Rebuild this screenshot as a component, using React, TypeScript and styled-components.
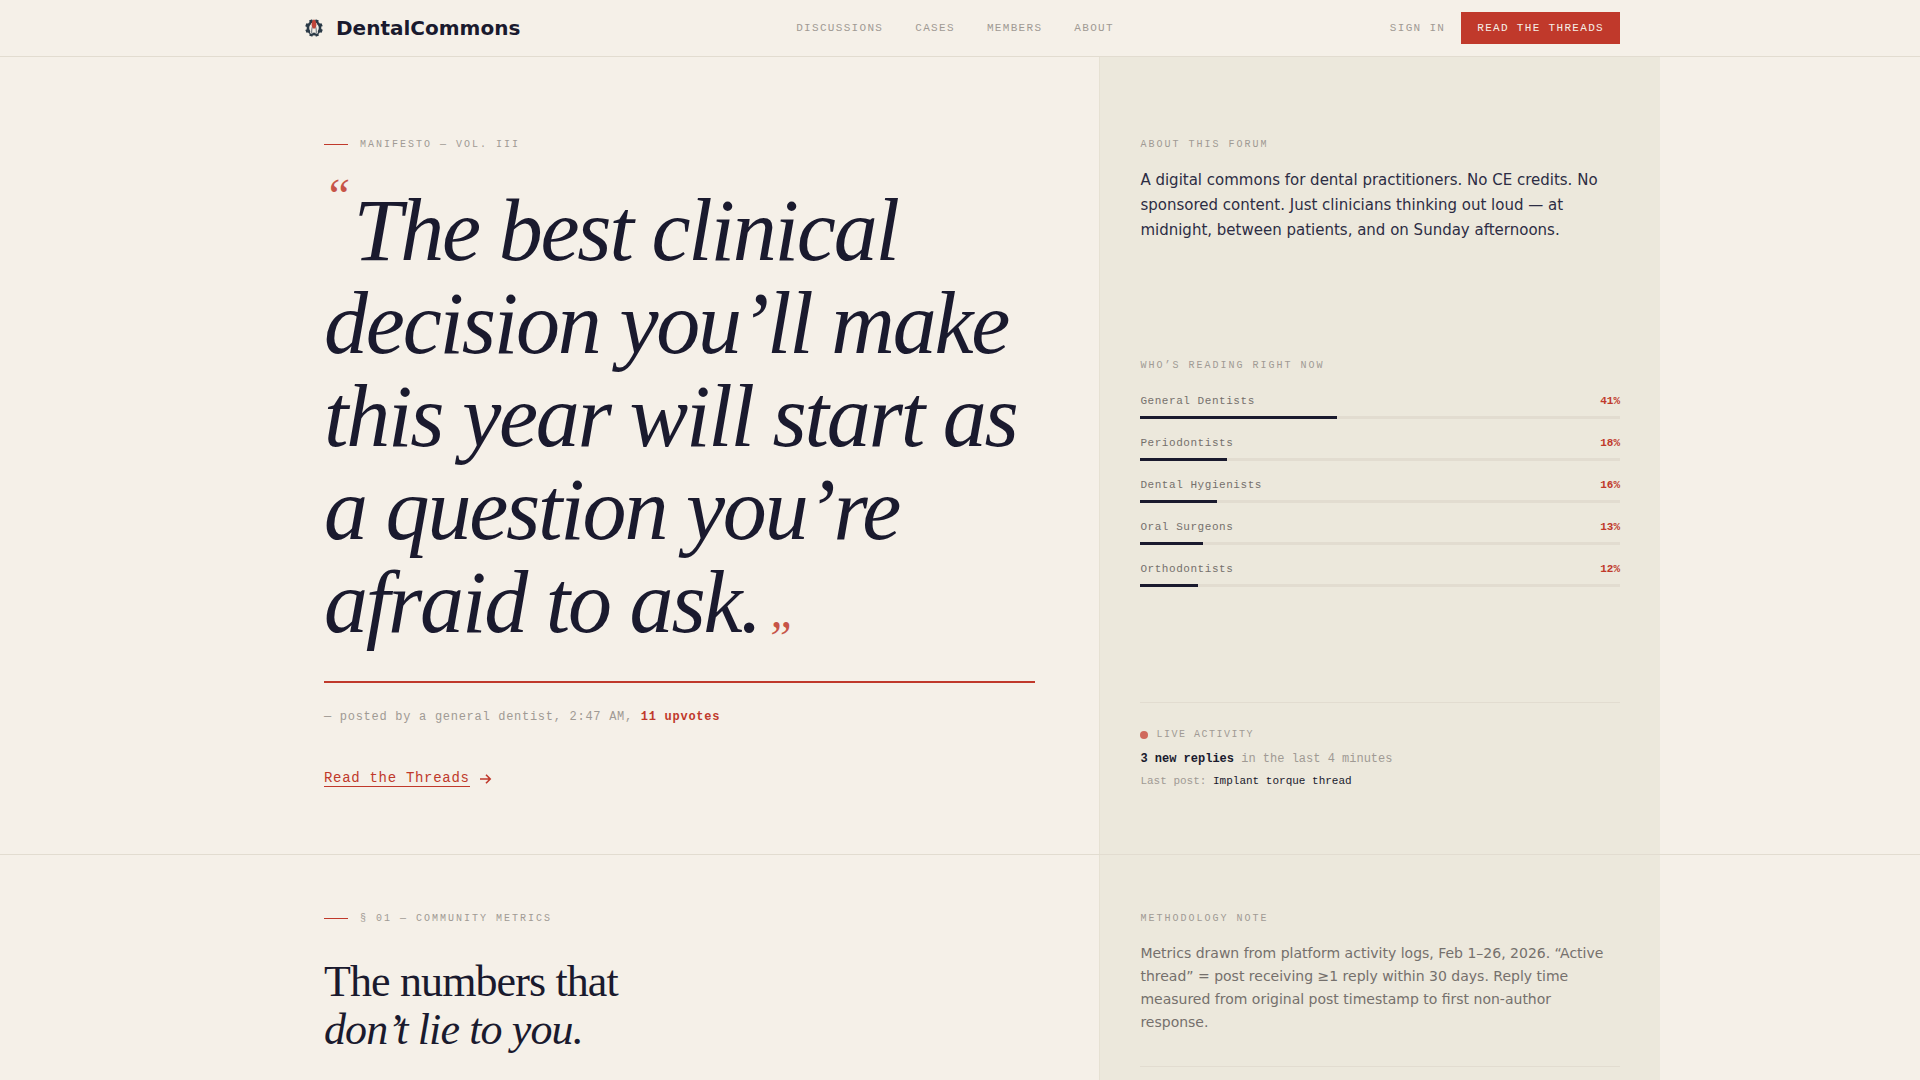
import React from "react";
import styled, { createGlobalStyle } from "styled-components";

const ink = "#1a1a2e";
const red = "#c0392b";
const mono = '"Liberation Mono", monospace';
const sans = '"DejaVu Sans", sans-serif';
const serif = '"Liberation Serif", serif';

const GlobalStyle = createGlobalStyle`
  *, *::before, *::after { box-sizing: border-box; }
  body { margin: 0; background: #f5f0e8; color: ${ink}; font-family: ${sans}; overflow-x: hidden; }
  h1, h2, h3, p, ul { margin: 0; padding: 0; }
  a { color: inherit; text-decoration: none; }
  ul { list-style: none; }
`;

const Header = styled.header`
  border-bottom: 1px solid #e2dcd0;
`;
const HeaderInner = styled.div`
  max-width: 1400px;
  height: 56px;
  margin: 0 auto;
  padding: 0 40px;
  display: flex;
  align-items: center;
  justify-content: space-between;
`;
const Brand = styled.a`
  display: flex;
  align-items: center;
  gap: 8px;
  font-size: 20px;
  font-weight: 700;
  line-height: 28px;
`;
const Nav = styled.nav`
  display: flex;
  gap: 32px;
`;
const NavLink = styled.a`
  font: 11px/16px ${mono};
  letter-spacing: 1.32px;
  text-transform: uppercase;
  color: #a09a94;
`;
const Actions = styled.div`
  display: flex;
  align-items: center;
  gap: 16px;
`;
const Cta = styled.button`
  border: 0;
  padding: 8px 16px;
  background: ${red};
  color: #f5f0e8;
  font: 11px/16px ${mono};
  letter-spacing: 1.32px;
  text-transform: uppercase;
  cursor: pointer;
`;

const Section = styled.section`
  border-bottom: 1px solid #e2dcd0;
`;
const Columns = styled.div`
  max-width: 1400px;
  margin: 0 auto;
  display: grid;
  grid-template-columns: 3fr 1px 2fr;
`;
const Divider = styled.div`
  background: #e6e1d3;
`;
const Main = styled.div<{ $top: number }>`
  padding: ${(p) => p.$top}px 64px 64px;
`;
const Aside = styled.aside<{ $top: number }>`
  display: flex;
  flex-direction: column;
  justify-content: space-between;
  padding: ${(p) => p.$top}px 40px 64px;
  background: #ece8dc;
`;
const Eyebrow = styled.div`
  display: flex;
  align-items: center;
  gap: 12px;
  font: 10px/15px ${mono};
  letter-spacing: 2px;
  text-transform: uppercase;
  color: #a09a94;
  &::before { content: ""; width: 24px; height: 1px; background: ${red}; }
`;
const Label = styled.h3`
  font: 10px/15px ${mono};
  letter-spacing: 2px;
  text-transform: uppercase;
  color: #a09a94;
`;

const Quote = styled.h1`
  margin-top: 32px;
  font: italic 400 88px/93px ${serif};
  letter-spacing: -2.2px;
`;
const Mark = styled.span`
  color: ${red};
  font-size: 48px;
  line-height: 0;
  opacity: 0.85;
`;
const OpenMark = styled(Mark)`
  margin-right: 5px;
  vertical-align: 48px;
`;
const CloseMark = styled(Mark)`
  margin-left: 5px;
  vertical-align: -22px;
`;
const Rule = styled.hr`
  height: 2px;
  margin: 32px 0 24px;
  border: 0;
  background: ${red};
`;
const Credit = styled.p`
  font: 12px/20px ${mono};
  letter-spacing: 0.72px;
  color: #a09a94;
  strong { color: ${red}; }
`;
const ThreadLink = styled.a`
  display: inline-flex;
  align-items: center;
  gap: 8px;
  margin-top: 40px;
  padding: 3px 0;
  color: ${red};
  font: 14px/16px ${mono};
  letter-spacing: 0.7px;
  span { border-bottom: 1px solid ${red}; }
`;

const About = styled.p`
  margin-top: 16px;
  font-size: 15px;
  line-height: 25px;
  color: #2d2d44;
`;
const Readers = styled.ul`
  display: grid;
  gap: 16px;
  margin-top: 20px;
`;
const ReaderLine = styled.div`
  display: flex;
  justify-content: space-between;
  font: 11px/17px ${mono};
  letter-spacing: 0.55px;
  color: #75706c;
  strong { color: ${red}; letter-spacing: 0; }
`;
const Track = styled.div`
  height: 3px;
  margin-top: 6px;
  background: #e2dcd0;
`;
const Fill = styled.div`
  height: 100%;
  background: ${ink};
`;
const Live = styled.div`
  padding-top: 24px;
  border-top: 1px solid #e2dcd0;
`;
const LiveHead = styled.div`
  display: flex;
  align-items: center;
  gap: 8px;
  font: 10px/15px ${mono};
  letter-spacing: 1.5px;
  text-transform: uppercase;
  color: #a09a94;
  &::before { content: ""; width: 8px; height: 8px; border-radius: 50%; background: #d0695c; }
`;
const LiveText = styled.p<{ $small?: boolean }>`
  margin-top: ${(p) => (p.$small ? 4 : 8)}px;
  font: ${(p) => (p.$small ? 11 : 12)}px/18px ${mono};
  color: #a09a94;
  strong, a { color: ${ink}; }
`;

const Title = styled.h2`
  margin-top: 32px;
  font: 400 44px/48px ${serif};
  letter-spacing: -0.88px;
`;
const Method = styled.div`
  padding-bottom: 32px;
  border-bottom: 1px solid #e2dcd0;
`;
const Note = styled.p`
  margin-top: 16px;
  font-size: 14px;
  line-height: 23px;
  color: #75706c;
`;

const readers = [
  { name: "General Dentists", share: 41 },
  { name: "Periodontists", share: 18 },
  { name: "Dental Hygienists", share: 16 },
  { name: "Oral Surgeons", share: 13 },
  { name: "Orthodontists", share: 12 },
];

const Logo = () => (
  <svg width="28" height="28" viewBox="0 0 28 28" aria-hidden="true">
    <circle cx="14" cy="14" r="6.1" fill="none" stroke="#2b3a47" strokeWidth="2.6" />
    {[22, 67, 112, 157, 202, 247, 292, 337].map((a) => (
      <rect key={a} x="12.3" y="5.2" width="3.4" height="3" rx="0.5" fill="#2b3a47" transform={`rotate(${a} 14 14)`} />
    ))}
    <path d="M11.2 9h5.6l.4 4.8.8 5.4-2.2.6L14 15.4 12.2 19.800l-2.200-.6.8-5.4z" fill="#f0ece6" />
    <path d="M12.600 11.500c-.7 2.400-1 5-1 7.400M15.400 11.500c.7 2.400 1 5 1 7.400" fill="none" stroke="#2b3a47" strokeWidth="0.7" />
    <path d="M14 5.2c1.900 1.300 2.700 3.400 2.300 6.600L15 14.400h-2l-1.300-2.600c-.4-3.200.4-5.300 2.300-6.600z" fill="#c0453a" />
  </svg>
);

const Arrow = () => (
  <svg width="16" height="16" viewBox="0 0 16 16" fill="none" stroke="currentColor" strokeWidth="1.6" aria-hidden="true">
    <path d="M2 8h10.2M8 3.8 12.2 8 8 12.2" />
  </svg>
);

export default function App() {
  return (
    <>
      <GlobalStyle />
      <Header>
        <HeaderInner>
          <Brand href="#">
            <Logo />
            DentalCommons
          </Brand>
          <Nav>
            {["Discussions", "Cases", "Members", "About"].map((item) => (
              <NavLink key={item} href="#">{item}</NavLink>
            ))}
          </Nav>
          <Actions>
            <NavLink href="#">Sign in</NavLink>
            <Cta type="button">Read the Threads</Cta>
          </Actions>
        </HeaderInner>
      </Header>
      <main>
        <Section>
          <Columns>
            <Main $top={80}>
              <Eyebrow>Manifesto — Vol. III</Eyebrow>
              <Quote>
                <OpenMark>“</OpenMark>The best clinical decision you’ll make this year will start as a question you’re
                afraid to ask.<CloseMark>”</CloseMark>
              </Quote>
              <Rule />
              <Credit>— posted by a general dentist, 2:47 AM, <strong>11 upvotes</strong></Credit>
              <ThreadLink href="#"><span>Read the Threads</span><Arrow /></ThreadLink>
            </Main>
            <Divider />
            <Aside $top={80}>
              <div>
                <Label>About this forum</Label>
                <About>
                  A digital commons for dental practitioners. No CE credits. No sponsored content. Just clinicians
                  thinking out loud — at midnight, between patients, and on Sunday afternoons.
                </About>
              </div>
              <div>
                <Label>Who’s reading right now</Label>
                <Readers>
                  {readers.map((r) => (
                    <li key={r.name}>
                      <ReaderLine><span>{r.name}</span><strong>{r.share}%</strong></ReaderLine>
                      <Track><Fill style={{ width: `${r.share}%` }} /></Track>
                    </li>
                  ))}
                </Readers>
              </div>
              <Live>
                <LiveHead>Live activity</LiveHead>
                <LiveText><strong>3 new replies</strong> in the last 4 minutes</LiveText>
                <LiveText $small>Last post: <a href="#">Implant torque thread</a></LiveText>
              </Live>
            </Aside>
          </Columns>
        </Section>
        <Section>
          <Columns>
            <Main $top={56}>
              <Eyebrow>§ 01 — Community Metrics</Eyebrow>
              <Title>The numbers that<br /><em>don’t lie to you.</em></Title>
            </Main>
            <Divider />
            <Aside $top={56}>
              <Method>
                <Label>Methodology note</Label>
                <Note>
                  Metrics drawn from platform activity logs, Feb 1–26, 2026. “Active thread” = post receiving ≥1 reply
                  within 30 days. Reply time measured from original post timestamp to first non-author response.
                </Note>
              </Method>
            </Aside>
          </Columns>
        </Section>
      </main>
    </>
  );
}
